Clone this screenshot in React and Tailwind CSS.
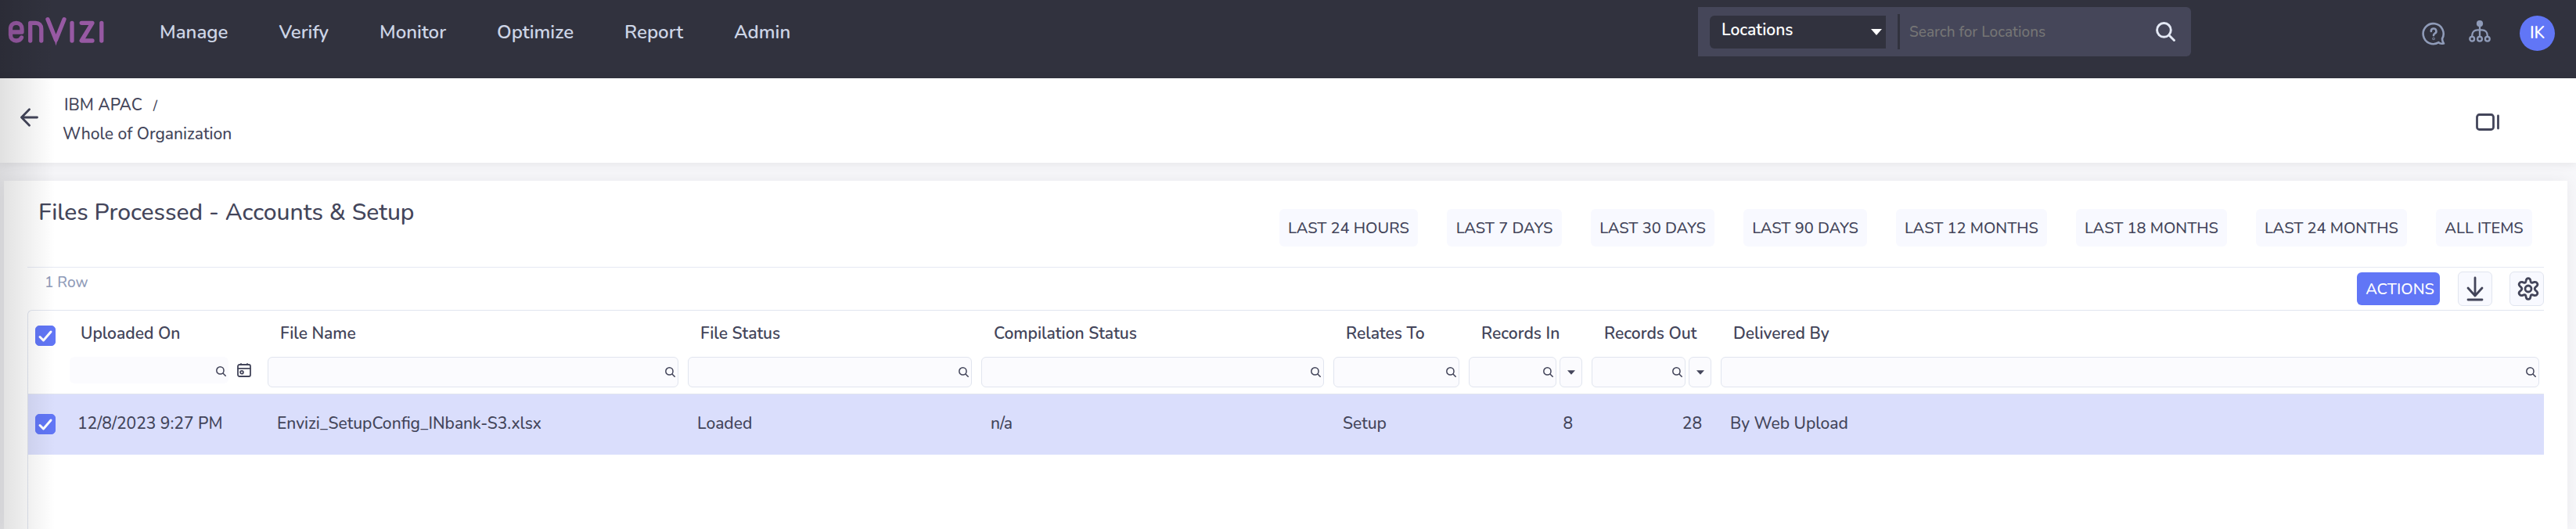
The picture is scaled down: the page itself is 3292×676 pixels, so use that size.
import React from 'react';

const NAV = ['Manage', 'Verify', 'Monitor', 'Optimize', 'Report', 'Admin'];

const RANGES = [
  { label: 'LAST 24 HOURS', width: 'min-w-[177px]' },
  { label: 'LAST 7 DAYS', width: 'min-w-[147px]' },
  { label: 'LAST 30 DAYS', width: 'min-w-[158px]' },
  { label: 'LAST 90 DAYS', width: 'min-w-[158px]' },
  { label: 'LAST 12 MONTHS', width: 'min-w-[193px]' },
  { label: 'LAST 18 MONTHS', width: 'min-w-[193px]' },
  { label: 'LAST 24 MONTHS', width: 'min-w-[193px]' },
  { label: 'ALL ITEMS', width: 'min-w-[123px]' },
];

const COLUMNS = [
  { title: 'Uploaded On', value: '12/8/2023 9:27 PM', col: 'w-[255px]', extra: 'calendar' },
  { title: 'File Name', value: 'Envizi_SetupConfig_INbank-S3.xlsx', col: 'w-[537px]' },
  { title: 'File Status', value: 'Loaded', col: 'w-[375px]' },
  { title: 'Compilation Status', value: 'n/a', col: 'w-[450px]' },
  { title: 'Relates To', value: 'Setup', col: 'w-[173px]' },
  { title: 'Records In', value: '8', col: 'w-[157px]', extra: 'menu', numeric: true },
  { title: 'Records Out', value: '28', col: 'w-[165px]', extra: 'menu', numeric: true },
  { title: 'Delivered By', value: 'By Web Upload', col: '' },
];

function Logo() {
  return (
    <svg viewBox="0 0 124 40" className="h-10 w-[124px]" fill="none" stroke="#9759a3" strokeWidth="5.300" strokeLinecap="round" strokeLinejoin="round" role="img" aria-label="envizi">
      <path d="M3.500 21H18V17C18 12 15.200 9.300 10.800 9.300S3.500 12 3.500 17V24.500C3.500 29.200 6.300 32 10.800 32C14 32 16.500 30.500 17.500 28" />
      <path d="M28.700 32V9.300H35.500C40 9.300 42.800 12 42.800 17V32" />
      <path d="M51 4.700L61.500 31L72 4.700" />
      <path d="M59 29L61.500 38.500L64 29Z" fill="#9759a3" stroke="none" />
      <path d="M82 9.300V32M94.200 9.300H108L94.200 32H108M119.800 9.300V32" />
    </svg>
  );
}

function SearchIcon({ className }) {
  return (
    <svg viewBox="0 0 24 24" className={className} fill="none" stroke="currentColor" strokeWidth="2.800" strokeLinecap="round" aria-hidden="true">
      <circle cx="10" cy="10" r="8.500" />
      <path d="M16.500 16.500L22.500 22.500" />
    </svg>
  );
}

function HelpIcon() {
  return (
    <svg viewBox="0 0 30 30" className="size-[30px]" fill="none" stroke="currentColor" strokeWidth="2.600" strokeLinecap="round" strokeLinejoin="round" aria-hidden="true">
      <path d="M26 21.500A13 13 0 1 0 21.500 26.200C22.500 27.500 25.500 28 28 27.500C26.800 26 26 24 26 21.500Z" />
      <path d="M11.800 12A3.300 3.300 0 1 1 16.500 14.800C15.400 15.400 15 16 15 17.200" />
      <circle cx="15" cy="21.500" r="0.400" />
    </svg>
  );
}

function HierarchyIcon() {
  return (
    <svg viewBox="0 0 28 28" className="size-7" fill="none" stroke="currentColor" strokeWidth="2.300" aria-hidden="true">
      <circle cx="14" cy="4.200" r="4.100" fill="currentColor" stroke="none" />
      <path d="M14 6V20.500M4.200 20.500V19.500C4.200 15 7 12.300 11 12.300H17C21 12.300 23.800 15 23.800 19.500V20.500" />
      <circle cx="4.200" cy="23.700" r="2.900" />
      <circle cx="14" cy="23.700" r="2.900" />
      <circle cx="23.800" cy="23.700" r="2.900" />
    </svg>
  );
}

function ArrowLeftIcon() {
  return (
    <svg viewBox="0 0 24 24" className="size-6" fill="none" stroke="currentColor" strokeWidth="2.800" strokeLinecap="round" strokeLinejoin="round" aria-hidden="true">
      <path d="M12.500 1.800L2.500 12L12.500 22.200M2.500 12H22.500" />
    </svg>
  );
}

function PanelIcon() {
  return (
    <svg viewBox="0 0 30 22" className="h-[22px] w-[30px]" fill="none" stroke="currentColor" strokeWidth="2.800" strokeLinecap="round" aria-hidden="true">
      <rect x="1.500" y="1.500" width="21" height="19" rx="3" />
      <path d="M28.500 3V19" />
    </svg>
  );
}

function DownloadIcon() {
  return (
    <svg viewBox="0 0 24 32" className="h-8 w-6" fill="none" stroke="currentColor" strokeWidth="2.800" strokeLinecap="round" strokeLinejoin="round" aria-hidden="true">
      <path d="M12 2V25M3 15L12 25L21 15M3 30H21" />
    </svg>
  );
}

function GearIcon() {
  return (
    <svg viewBox="0 0 28 30" className="h-[30px] w-7" fill="none" stroke="currentColor" strokeWidth="2.800" strokeLinejoin="round" aria-hidden="true">
      <path d="M11.200 4.300Q11.700 1.600 14 1.600T16.800 4.300L17.200 6.200Q17.500 7.600 19 7.400L22 6.400Q24.200 5.900 25.400 8T24.800 11.600L23.200 13Q21.300 15 23.200 17L24.800 18.400Q26.500 20 25.400 22T22 23.600L19 22.600Q17.500 22.400 17.200 23.800L16.800 25.700Q16.300 28.400 14 28.400T11.200 25.700L10.800 23.800Q10.500 22.400 9 22.600L6 23.600Q3.800 24.100 2.600 22T3.200 18.400L4.800 17Q6.700 15 4.800 13L3.200 11.600Q1.500 10 2.600 8T6 6.400L9 7.400Q10.500 7.600 10.800 6.200Z" />
      <circle cx="14" cy="15" r="4" />
    </svg>
  );
}

function CalendarIcon() {
  return (
    <svg viewBox="0 0 18 18" className="size-[18px]" fill="none" stroke="currentColor" strokeWidth="1.800" strokeLinecap="round" aria-hidden="true">
      <rect x="1" y="2" width="16" height="15" rx="2" />
      <path d="M1 6.800H17M5 0.900V2M13 0.900V2" />
      <circle cx="6" cy="11.800" r="1.900" />
    </svg>
  );
}

function Caret({ className }) {
  return (
    <svg viewBox="0 0 14 8" className={className} fill="currentColor" aria-hidden="true">
      <path d="M0 0H14L7 8Z" />
    </svg>
  );
}

function CheckBox({ label }) {
  return (
    <label className="relative ml-[9px] block size-[26px]">
      <input type="checkbox" defaultChecked aria-label={label} className="peer block size-[26px] appearance-none rounded-[5px] border border-[#6176f6] bg-white checked:bg-[#6176f6]" />
      <svg viewBox="0 0 26 26" className="pointer-events-none absolute inset-0 hidden size-[26px] peer-checked:block" fill="none" stroke="#ffffff" strokeWidth="3" strokeLinecap="round" strokeLinejoin="round" aria-hidden="true">
        <path d="M6 14.500L10.500 19L20 8" />
      </svg>
    </label>
  );
}

function Filter({ column }) {
  const plain = column.extra === 'calendar';
  return (
    <div className={plain ? 'flex items-start pl-2 pr-[15px]' : 'flex gap-1 px-[6px]'}>
      <label className={plain ? 'relative block h-[34px] min-w-0 flex-1 rounded-md bg-[#fbfbfe]' : 'relative block h-[39px] min-w-0 flex-1 rounded-md border border-[#e1e5ef] bg-[#fbfbfe]'}>
        <input type="text" aria-label={'Filter by ' + column.title} className="block size-full bg-transparent pl-3 pr-6 text-[21px] text-[#43455a] outline-none" />
        <SearchIcon className="pointer-events-none absolute right-[3px] top-3 size-[13px]" />
      </label>
      {plain && (
        <button type="button" aria-label="Choose date" className="ml-[11px] mt-2">
          <CalendarIcon />
        </button>
      )}
      {column.extra === 'menu' && (
        <button type="button" aria-label={column.title + ' filter options'} className="flex h-[39px] w-[29px] items-center justify-center rounded-md border border-[#e1e5ef] bg-[#fbfbfe]">
          <Caret className="h-[6px] w-[10px]" />
        </button>
      )}
    </div>
  );
}

export default function App() {
  return (
    <div className="relative flex min-h-screen flex-col overflow-hidden bg-[#f7f7fa] font-['Nunito','Lato',sans-serif] text-[#43455a]">
      <header className="flex h-[100px] items-start bg-[#31323e] pl-[10px] pr-[27px]">
        <a href="#home" className="mt-[20px]">
          <Logo />
        </a>
        <nav className="ml-[70px] mt-[25px] flex gap-[65px] text-2xl leading-8 font-semibold text-[#cdd5e6]">
          {NAV.map((item) => (
            <a key={item} href={'#' + item.toLowerCase()}>{item}</a>
          ))}
        </nav>
        <form className="ml-auto mt-[9px] flex h-[63px] w-[630px] items-center rounded-r-md bg-[#454659] pl-[15px] pr-[20px] text-white">
          <div className="relative h-[42px] w-[225px]">
            <select aria-label="Search in" className="block size-full appearance-none rounded-l-md bg-[#31323e] pb-1 pl-[15px] text-[21px] font-semibold">
              <option>Locations</option>
            </select>
            <Caret className="pointer-events-none absolute right-[5px] top-[17px] h-2 w-[14px]" />
          </div>
          <div className="ml-[15px] h-[45px] w-[3px] bg-[#31323e]" />
          <input type="search" aria-label="Search for Locations" placeholder="Search for Locations" className="ml-3 h-10 min-w-0 flex-1 bg-transparent text-[19px] font-medium outline-none placeholder:text-[#757575]" />
          <button type="submit" aria-label="Search" className="text-[#e4e9f5]">
            <SearchIcon className="size-[25px]" />
          </button>
        </form>
        <div className="ml-[295px] mt-[20px] flex h-[45px] items-center text-[#8f9bb8]">
          <button type="button" aria-label="Help"><HelpIcon /></button>
          <button type="button" aria-label="Hierarchy" className="ml-[30px] mb-[6px]"><HierarchyIcon /></button>
          <button type="button" className="ml-[37px] size-[45px] rounded-full bg-[#6176f6] text-[21px] font-semibold text-white">IK</button>
        </div>
      </header>

      <div className="relative flex h-[108px] items-start bg-white pl-[25px] pr-[98px] shadow-[0_2px_12px_rgba(0,0,0,0.08)]">
        <button type="button" aria-label="Back" className="mt-[38px]"><ArrowLeftIcon /></button>
        <nav aria-label="Breadcrumb" className="ml-[31px] mt-4 text-[21px] leading-[37px] font-medium">
          <div className="pl-[2px]">
            <a href="#ibm-apac">IBM APAC</a>
            <span className="ml-[14px] text-lg">/</span>
          </div>
          <a href="#organization" className="block">Whole of Organization</a>
        </nav>
        <button type="button" aria-label="Toggle side panel" className="ml-auto mt-[45px]"><PanelIcon /></button>
      </div>

      <main className="ml-[5px] mr-[11px] mt-[23px] flex grow flex-col bg-white px-[30px] shadow-[0_0_20px_rgba(0,0,0,0.06)]">
        <div className="flex items-start border-b border-[#e6e9f3] pb-[26px] pl-[14px] pr-[15px]">
          <h1 className="mt-[21px] text-[30px] leading-10 font-medium">Files Processed - Accounts &amp; Setup</h1>
          <div className="ml-auto mt-9 flex gap-[37px]">
            {RANGES.map((range) => (
              <button key={range.label} type="button" className={'h-12 rounded-md bg-[#f8f9ff] pt-[2px] text-[20px] font-medium ' + range.width}>
                {range.label}
              </button>
            ))}
          </div>
        </div>

        <div className="flex h-[54px] items-start pt-[5px]">
          <span className="ml-[22px] text-[19px] leading-7 font-medium text-[#8f9bb8]">1 Row</span>
          <button type="button" className="ml-auto mt-px h-[42px] w-[106px] rounded-md bg-[#6176f6] pl-1 pt-[2px] text-[20px] font-medium text-white">ACTIONS</button>
          <button type="button" aria-label="Download" className="ml-[23px] flex size-11 items-center justify-center rounded-md border border-[#e1e5ef] bg-[#f8f9ff]"><DownloadIcon /></button>
          <button type="button" aria-label="Settings" className="ml-[22px] flex size-11 items-center justify-center rounded-md border border-[#e1e5ef] bg-[#f8f9ff] pl-1"><GearIcon /></button>
        </div>

        <div className="grow rounded-tl-md border-l border-t border-[#e1e5ef]">
          <table className="w-full table-fixed border-collapse text-left text-[21px] leading-8 font-medium">
            <colgroup>
              <col className="w-[45px]" />
              {COLUMNS.map((column) => (
                <col key={column.title} className={column.col} />
              ))}
            </colgroup>
            <thead>
              <tr className="h-[59px] align-top">
                <td className="pt-[19px]"><CheckBox label="Select all rows" /></td>
                {COLUMNS.map((column) => (
                  <th key={column.title} scope="col" className="pl-[22px] pt-[13px] font-semibold whitespace-nowrap">{column.title}</th>
                ))}
              </tr>
              <tr className="h-[47px] border-b border-[#e1e5ef] align-top">
                <td />
                {COLUMNS.map((column) => (
                  <td key={column.title}><Filter column={column} /></td>
                ))}
              </tr>
            </thead>
            <tbody>
              <tr className="h-[78px] bg-[#dadefc]">
                <td><CheckBox label="Select row" /></td>
                {COLUMNS.map((column) => (
                  <td key={column.title} className={column.numeric ? 'pr-[18px] pb-[2px] text-right' : 'pl-[18px] pb-[2px] whitespace-nowrap'}>{column.value}</td>
                ))}
              </tr>
            </tbody>
          </table>
        </div>
      </main>

      <div className="pointer-events-none absolute inset-y-0 left-0 w-[70px] bg-linear-to-r from-black/12 to-transparent" />
    </div>
  );
}
